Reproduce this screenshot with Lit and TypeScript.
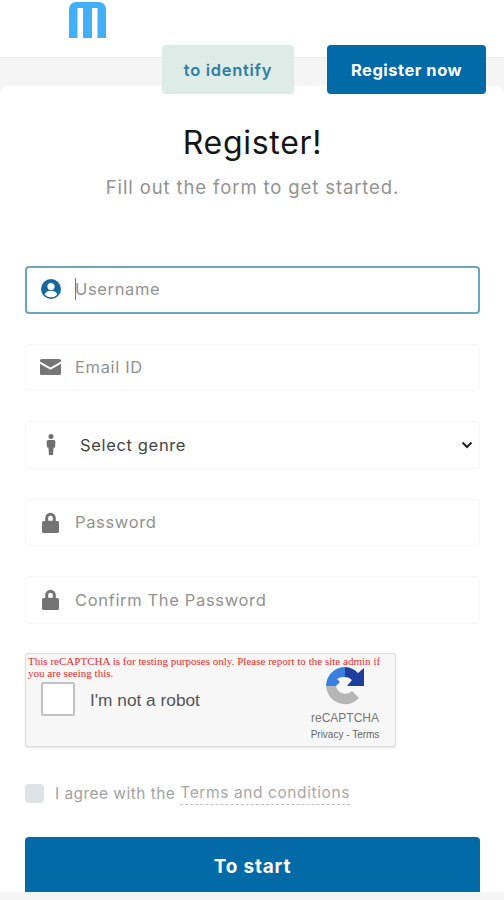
import { LitElement, html, css, svg } from "lit";
import { customElement } from "lit/decorators.js";

const lock = svg`<path d="M4.200 9V6a5.300 5.300 0 0 1 10.600 0v3h1.600a1.600 1.600 0 0 1 1.600 1.600v8.800a1.600 1.600 0 0 1-1.600 1.600H2.600A1.600 1.600 0 0 1 1 19.400v-8.800A1.600 1.600 0 0 1 2.600 9zm3-.2h4.600V6a2.300 2.300 0 0 0-4.600 0z" fill="#747474"/>`;

@customElement("app-root")
export class AppRoot extends LitElement {
  static styles = css`
    :host {
      display: block;
      width: 504px;
      height: 900px;
      overflow: hidden;
      background: #f5f5f5;
      font-family: "Inter", "Open Sans", sans-serif;
      color: #8a8a8a;
    }
    .header {
      height: 57px;
      background: #fff;
      border-bottom: 1px solid #e9e9e9;
      padding-left: 69px;
    }
    .logo { display: block; }
    .actions {
      position: relative;
      z-index: 1;
      display: flex;
      justify-content: flex-end;
      gap: 33px;
      height: 49px;
      margin-top: -13px;
      padding-right: 18px;
    }
    .btn {
      display: flex;
      align-items: center;
      justify-content: center;
      border-radius: 4px;
      font-size: 16.5px;
      font-weight: 600;
      letter-spacing: 0.7px;
    }
    .identify { width: 132px; background: #deece7; color: #2f7ea6; }
    .register { width: 159px; background: #026aa7; color: #fff; font-weight: 700; letter-spacing: 0.5px; }
    .card {
      margin-top: -8px;
      height: 806px;
      background: #fff;
      border-radius: 8px 8px 0 0;
      padding: 0 24px 0 25px;
      box-sizing: border-box;
      display: flex;
      flex-direction: column;
    }
    h1 {
      margin: 38px 0 0;
      height: 37px;
      font-size: 32px;
      line-height: 37px;
      font-weight: 400;
      letter-spacing: 0.7px;
      color: #161616;
      text-align: center;
    }
    .sub {
      margin: 14px 0 0;
      height: 24px;
      line-height: 24px;
      font-size: 18.5px;
      letter-spacing: 0.88px;
      color: #929292;
      text-align: center;
    }
    .fields {
      display: flex;
      flex-direction: column;
      gap: 30px;
      margin-top: 67px;
    }
    .field {
      height: 47.5px;
      box-sizing: border-box;
      display: flex;
      align-items: center;
      border: 1px solid #f5f5f5;
      border-radius: 4px;
      font-size: 16.5px;
      letter-spacing: 0.65px;
      color: #929292;
      background: #fff;
    }
    .field.focus { border: 2px solid #6aa6c4; padding-bottom: 2px; }
    .icon {
      width: 49px;
      flex: none;
      display: flex;
      justify-content: center;
    }
    .focus .icon { width: 48px; }
    .caret { width: 1px; height: 22px; background: #777; margin-right: -1px; }
    .select { color: #444; justify-content: space-between; padding-right: 6px; }
    .select-label { display: flex; align-items: center; }
    .select-text { margin-left: 5px; }
    .captcha {
      position: relative;
      width: 371px;
      height: 94px;
      margin-top: 29px;
      background: #f7f7f7;
      border: 1px solid #dedede;
      border-radius: 3px;
      box-shadow: 0 1px 2px rgba(0, 0, 0, 0.12);
      box-sizing: border-box;
      display: flex;
    }
    .warn {
      position: absolute;
      top: 1px;
      left: 2px;
      right: 8px;
      font-family: "Liberation Serif", serif;
      font-size: 11.06px;
      line-height: 12px;
      color: #ee2a2a;
    }
    .cbox {
      width: 34px;
      height: 34px;
      margin: 28px 0 0 15px;
      background: #fff;
      border: 2px solid #c2c2c2;
      border-radius: 2px;
      box-sizing: border-box;
    }
    .robot {
      margin: 35px 0 0 15px;
      font-family: "Liberation Sans", sans-serif;
      font-size: 17.3px;
      line-height: 22px;
      color: #555;
    }
    .brand {
      position: absolute;
      right: 13px;
      top: 13px;
      width: 74px;
      display: flex;
      flex-direction: column;
      align-items: center;
      font-family: "Liberation Sans", sans-serif;
      color: #777;
    }
    .brand svg { display: block; }
    .rc { font-size: 12px; line-height: 12px; margin-top: 7px; }
    .pt { font-size: 10px; line-height: 10px; margin-top: 6px; color: #666; white-space: nowrap; }
    .agree {
      display: flex;
      align-items: center;
      margin-top: 37px;
      height: 20px;
      font-size: 15.5px;
      letter-spacing: 0.45px;
      color: #a2a2a2;
    }
    .tick { width: 19px; height: 19px; background: #dfe3e6; border-radius: 4px; flex: none; margin-right: 11px; }
    .terms {
      border-bottom: 1px dashed #bdbdbd;
      padding-bottom: 2px;
      margin-left: 5px;
      letter-spacing: 0.6px;
      color: #a8a8a8;
    }
    .start {
      margin-top: 33px;
      height: 55px;
      padding-top: 4px;
      box-sizing: border-box;
      background: #026aa7;
      border-radius: 4px 4px 0 0;
      color: #fff;
      font-size: 19px;
      font-weight: 700;
      letter-spacing: 0.8px;
      display: flex;
      align-items: center;
      justify-content: center;
      flex: none;
    }
  `;

  render() {
    return html`
      <div class="header">
        <svg class="logo" width="38" height="39" viewBox="0 0 38 39">
          <path d="M0 38V9a7 7 0 0 1 7-7h23a7 7 0 0 1 7 7v29h-8.500V8h-5.500V38H14V8H8.500V38z" fill="#42b0f8"/>
        </svg>
      </div>
      <div class="actions">
        <div class="btn identify">to identify</div>
        <div class="btn register">Register now</div>
      </div>
      <div class="card">
        <h1>Register!</h1>
        <p class="sub">Fill out the form to get started.</p>
        <div class="fields">
          <div class="field focus">
            <span class="icon"><svg width="20" height="20" viewBox="0 0 20 20">
              <circle cx="10" cy="10" r="10" fill="#16699c"/>
              <circle cx="10" cy="7.600" r="3.600" fill="#fff"/>
              <path d="M3.600 15.400c1.200-2.600 3.600-3.600 6.400-3.600s5.200 1 6.400 3.600A8.200 8.200 0 0 1 10 18.200a8.200 8.200 0 0 1-6.400-2.800z" fill="#fff"/>
            </svg></span>
            <span class="caret"></span>Username
          </div>
          <div class="field">
            <span class="icon"><svg width="21" height="16" viewBox="0 0 21 16">
              <path d="M0 1.500A1.500 1.500 0 0 1 1.500 0h18A1.500 1.500 0 0 1 21 1.500v.9l-10.500 6L0 2.400z" fill="#767676"/>
              <path d="M0 4.800l10.500 6 10.500-6v9.700a1.500 1.500 0 0 1-1.500 1.500h-18A1.500 1.500 0 0 1 0 14.500z" fill="#767676"/>
            </svg></span>
            Email ID
          </div>
          <div class="field select">
            <span class="select-label">
              <span class="icon"><svg width="10" height="21" viewBox="0 0 10 21">
                <circle cx="5" cy="2.500" r="2.500" fill="#6f6f6f"/>
                <path d="M2.200 6h5.600A1.600 1.600 0 0 1 9.400 7.600l-.4 6H7.600L7 21H3l-.6-7.400H1l-.4-6A1.600 1.600 0 0 1 2.200 6z" fill="#6f6f6f"/>
              </svg></span>
              <span class="select-text">Select genre</span>
            </span>
            <svg width="12" height="8" viewBox="0 0 12 8"><path d="M1.500 1.500L6 6l4.500-4.500" fill="none" stroke="#222" stroke-width="2"/></svg>
          </div>
          <div class="field">
            <span class="icon"><svg width="19" height="21" viewBox="0 0 19 21">${lock}</svg></span>
            Password
          </div>
          <div class="field">
            <span class="icon"><svg width="19" height="21" viewBox="0 0 19 21">${lock}</svg></span>
            Confirm The Password
          </div>
        </div>
        <div class="captcha">
          <div class="warn">This reCAPTCHA is for testing purposes only. Please report to the site admin if you are seeing this.</div>
          <div class="cbox"></div>
          <div class="robot">I'm not a robot</div>
          <div class="brand">
            <svg width="38" height="38" viewBox="0 0 38 38">
              <path d="M0 19A19 19 0 0 0 33 31L26 24A9.500 9.500 0 0 1 10 19z" fill="#b6b6b6"/>
              <path d="M19 0A19 19 0 0 0 0 19H10L14 15 11 12A11 11 0 0 1 19 10z" fill="#3a7fe0"/>
              <path d="M19 0A19 19 0 0 1 32 6L38 1V19H21L26 13A9.500 9.500 0 0 0 19 10z" fill="#1f3f9e"/>
            </svg>
            <span class="rc">reCAPTCHA</span>
            <span class="pt">Privacy - Terms</span>
          </div>
        </div>
        <div class="agree">
          <span class="tick"></span>
          <span>I agree with the</span>
          <span class="terms">Terms and conditions</span>
        </div>
        <div class="start">To start</div>
      </div>
    `;
  }
}
